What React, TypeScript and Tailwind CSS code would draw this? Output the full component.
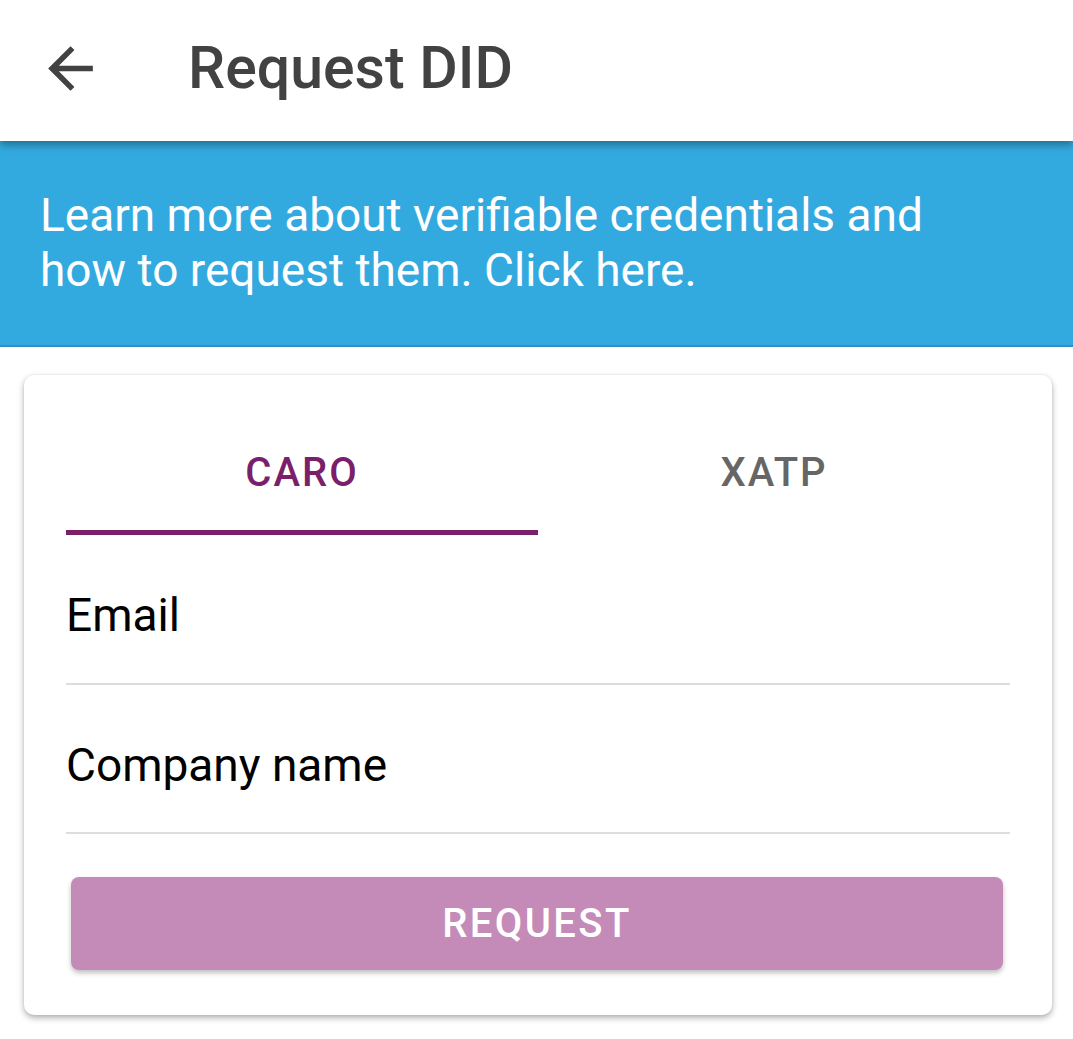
export default function App() {
  return (
    <div className="min-h-screen bg-white" style={{ fontFamily: "Roboto, 'Liberation Sans', sans-serif" }}>
      <header className="relative z-10 flex h-[141px] items-center bg-white shadow-[0_4px_8px_rgba(0,0,0,0.35)]">
        <button className="ml-[37px] mb-[4px] flex h-[67px] w-[67px] items-center justify-center text-[#424242]">
          <svg viewBox="0 0 24 24" className="h-[67px] w-[67px]" fill="currentColor">
            <path d="M20 11H7.83l5.59-5.59L12 4l-8 8 8 8 1.41-1.41L7.83 13H20v-2z" />
          </svg>
        </button>
        <h1 className="ml-[84px] mb-[6px] text-[59px] font-medium leading-none text-[#424242]">Request DID</h1>
      </header>

      <section className="border-b-2 border-[#2f8fc2] bg-[#33aadf] px-[40px] py-[47px]">
        <p className="text-[46px] leading-[55px] text-white">
          Learn more about verifiable credentials and
          <br />
          how to request them. Click here.
        </p>
      </section>

      <div className="ml-[24px] mr-[21px] mt-[28px] rounded-[10px] bg-white px-[42px] pb-[45px] pt-[40px] shadow-[0_3px_6px_rgba(0,0,0,0.3),0_0_3px_rgba(0,0,0,0.08)]">
        <div className="flex">
          <div className="flex h-[120px] flex-1 flex-col">
            <div className="flex flex-1 items-center justify-center text-[40px] font-medium tracking-[0.05em] text-[#7b1f6b]">
              CARO
            </div>
            <div className="h-[5px] bg-[#7b1f6b]" />
          </div>
          <div className="flex h-[120px] flex-1 flex-col">
            <div className="flex flex-1 items-center justify-center text-[40px] font-medium tracking-[0.05em] text-[#666666]">
              XATP
            </div>
            <div className="h-[5px]" />
          </div>
        </div>

        <div className="border-b-2 border-[#dddddd] pb-[41px] pt-[53px]">
          <div className="text-[46px] leading-[54px] text-black">Email</div>
        </div>
        <div className="border-b-2 border-[#dddddd] pb-[40px] pt-[53px]">
          <div className="text-[46px] leading-[54px] text-black">Company name</div>
        </div>

        <button className="ml-[5px] mr-[7px] mt-[43px] flex h-[93px] w-[calc(100%-12px)] items-center justify-center rounded-[8px] bg-[#c48bb8] text-[40px] font-medium tracking-[0.06em] text-white shadow-[0_3px_5px_rgba(0,0,0,0.25)]">
          REQUEST
        </button>
      </div>
    </div>
  );
}
